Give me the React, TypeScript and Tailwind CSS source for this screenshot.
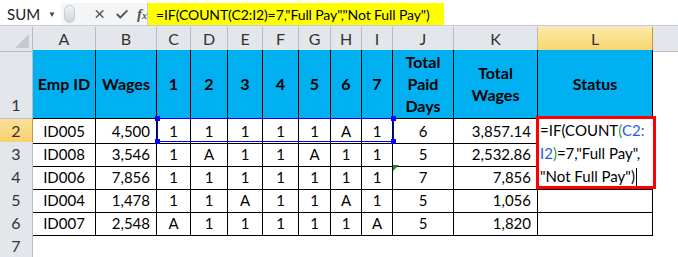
import { X, Check } from 'lucide-react';

const COLS = ['A', 'B', 'C', 'D', 'E', 'F', 'G', 'H', 'I', 'J', 'K', 'L'];

type Row = { id: string; wages: string; days: string[]; paid: string; total: string };

const rows: Row[] = [
  { id: 'ID005', wages: '4,500', days: ['1', '1', '1', '1', '1', 'A', '1'], paid: '6', total: '3,857.14' },
  { id: 'ID008', wages: '3,546', days: ['1', 'A', '1', '1', 'A', '1', '1'], paid: '5', total: '2,532.86' },
  { id: 'ID006', wages: '7,856', days: ['1', '1', '1', '1', '1', '1', '1'], paid: '7', total: '7,856' },
  { id: 'ID004', wages: '1,478', days: ['1', '1', 'A', '1', '1', 'A', '1'], paid: '5', total: '1,056' },
  { id: 'ID007', wages: '2,548', days: ['A', '1', '1', '1', '1', '1', 'A'], paid: '5', total: '1,820' },
];

const gridCols =
  'grid grid-cols-[33px_63px_61px_34px_37px_35px_36px_32px_31px_31px_61px_84px_115px_1fr]';

function FormulaBar() {
  return (
    <div className="flex h-[26px] items-stretch bg-white pt-[3px] border-b border-[#c6cbd1]">
      {/* name box */}
      <div className="flex w-[61px] shrink-0 items-center justify-between pl-[7px] pr-[5px] text-[15px] text-[#222]">
        <span>SUM</span>
        <span className="text-[8px] text-[#444]">▼</span>
      </div>
      <div className="flex w-[86px] shrink-0 items-center gap-[8px] bg-[#f4f5f7] pl-[3px]">
        <div className="h-[18px] w-[12px] rounded-full bg-gradient-to-b from-[#f2f3f5] to-[#cfd3d8] border border-[#c8ccd2]" />
        <X className="ml-[10px] h-[14px] w-[14px] text-[#555]" strokeWidth={2.6} />
        <Check className="h-[15px] w-[15px] text-[#555]" strokeWidth={3.2} />
        <span className="font-['Liberation_Serif',serif] text-[15px] italic font-bold text-[#555] leading-none">
          f<span className="text-[10px]">x</span>
        </span>
      </div>
      <div className="flex w-[297px] shrink-0 items-center overflow-hidden whitespace-nowrap bg-[#ffff00] pl-[8px] text-[14px] tracking-[-0.1px] text-black border-l border-[#c6cbd1]">
        =IF(COUNT(C2:I2)=7,"Full Pay","Not Full Pay")
      </div>
      <div className="flex-1 bg-white" />
    </div>
  );
}

function ColumnHeaders() {
  return (
    <div className={`${gridCols} h-[23px]`}>
      <div className="relative bg-[#e3e6ea] border-r border-b border-[#b7bcc2]">
        <svg className="absolute right-[3px] bottom-[3px]" width="14" height="14" viewBox="0 0 14 14">
          <polygon points="14,0 14,14 0,14" fill="#c5c9ce" />
        </svg>
      </div>
      {COLS.map((c) => (
        <div
          key={c}
          className={`flex items-center justify-center text-[16px] border-r border-b ${
            c === 'L'
              ? 'bg-gradient-to-b from-[#fdeaa6] to-[#f8d56c] border-[#c7963e] text-[#333]'
              : 'bg-[#e3e6ea] border-[#b7bcc2] text-[#333]'
          }`}
        >
          {c}
        </div>
      ))}
      <div className="bg-[#e3e6ea] border-b border-[#b7bcc2]" />
    </div>
  );
}

function RowHead({ n, active, tall }: { n: number; active?: boolean; tall?: boolean }) {
  return (
    <div
      className={`flex justify-center text-[16px] text-[#333] border-r border-b ${
        tall ? 'items-end pb-[1px]' : 'items-center'
      } ${active ? 'bg-gradient-to-b from-[#fbe09a] to-[#f7d06a] border-[#c7963e]' : 'bg-[#e3e6ea] border-[#b7bcc2]'}`}
    >
      {n}
    </div>
  );
}

export default function App() {
  const head = ['Emp ID', 'Wages', '1', '2', '3', '4', '5', '6', '7'];
  return (
    <div className="relative h-[257px] w-[678px] overflow-hidden bg-white font-['Lato',sans-serif]">
      <FormulaBar />
      <div className="h-[1px] bg-[#e8eaed]" />
      <ColumnHeaders />

      {/* row 1: blue header row */}
      <div className={`${gridCols} h-[69px]`}>
        <RowHead n={1} tall />
        {head.map((h, i) => (
          <div
            key={i}
            className="flex items-center justify-center bg-[#00b0f0] text-[16px] font-bold text-black border-r border-b border-black"
          >
            {h}
          </div>
        ))}
        <div className="flex items-center justify-center bg-[#00b0f0] text-center text-[16px] font-bold leading-[22px] text-black border-r border-b border-black">
          Total
          <br />
          Paid
          <br />
          Days
        </div>
        <div className="flex items-center justify-center bg-[#00b0f0] text-center text-[16px] font-bold leading-[22px] text-black border-r border-b border-black">
          Total
          <br />
          Wages
        </div>
        <div className="flex items-center justify-center bg-[#00b0f0] text-[16px] font-bold text-black border-r border-b border-black">
          Status
        </div>
        <div />
      </div>

      {rows.map((r, ri) => (
        <div key={r.id} className={`${gridCols} h-[23px]`}>
          <RowHead n={ri + 2} active={ri === 0} />
          <div className="flex items-center justify-center text-[15px] text-black border-r border-b border-black">
            {r.id}
          </div>
          <div className="flex items-center justify-end pr-[6px] text-[15px] text-black border-r border-b border-black">
            {r.wages}
          </div>
          {r.days.map((d, di) => (
            <div
              key={di}
              className="flex items-center justify-center text-[15px] text-black border-r border-b border-black"
            >
              {d}
            </div>
          ))}
          <div className="relative flex items-center justify-center text-[15px] text-black border-r border-b border-black">
            {ri === 2 && (
              <svg className="absolute left-0 top-0" width="6" height="6" viewBox="0 0 6 6">
                <polygon points="0,0 6,0 0,6" fill="#1e8a2e" />
              </svg>
            )}
            {r.paid}
          </div>
          <div className="flex items-center justify-end pr-[6px] text-[15px] text-black border-r border-b border-black">
            {r.total}
          </div>
          <div className="border-r border-b border-black" />
          <div />
        </div>
      ))}

      {/* row 7 */}
      <div className={`${gridCols} h-[23px]`}>
        <RowHead n={7} />
      </div>

      {/* selection range C2:I2 */}
      <div className="absolute left-[157px] top-[118px] h-[24px] w-[237px] border border-[#0000ff]">
        <div className="absolute -left-[3px] -top-[3px] h-[5px] w-[5px] bg-[#0000ff]" />
        <div className="absolute -left-[3px] -bottom-[3px] h-[5px] w-[5px] bg-[#0000ff]" />
        <div className="absolute -right-[3px] -top-[3px] h-[5px] w-[5px] bg-[#0000ff]" />
        <div className="absolute -right-[3px] -bottom-[3px] h-[5px] w-[5px] bg-[#0000ff]" />
      </div>

      {/* in-cell editor on L2 */}
      <div className="absolute left-[536px] top-[116px] h-[73px] w-[120px] border-[3px] border-[#ff0000] bg-white pl-[1px] text-[15px] leading-[23px] text-black">
        <div>
          =IF(COUNT<span className="text-[#27a045]">(</span>
          <span className="text-[#2f5be0]">C2:</span>
        </div>
        <div>
          <span className="text-[#2f5be0]">I2</span>
          <span className="text-[#27a045]">)</span>=7,"Full Pay",
        </div>
        <div className="flex items-center">
          "Not Full Pay")<span className="ml-[1px] inline-block h-[18px] w-[1px] bg-black" />
        </div>
      </div>
    </div>
  );
}
